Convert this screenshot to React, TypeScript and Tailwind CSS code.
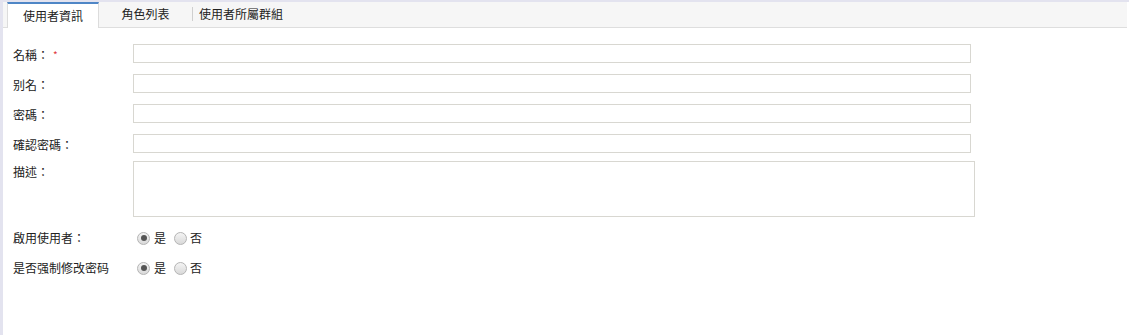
import React from 'react';

const font = "font-['Noto_Sans_CJK_TC','Noto_Sans_CJK_SC',sans-serif]";

function Radio({ checked }: { checked?: boolean }) {
  return (
    <span className="relative inline-flex h-[13px] w-[13px] items-center justify-center rounded-full border border-[#b4b4b4] bg-gradient-to-b from-[#f4f4f4] to-[#d9d9d9]">
      {checked && <span className="h-[6px] w-[6px] rounded-full bg-[#555]" />}
    </span>
  );
}

function RadioGroup() {
  return (
    <div className="flex items-center pl-[4px] text-[12px] text-[#222]">
      <Radio checked />
      <span className="ml-[4px]">是</span>
      <span className="ml-[8px] flex"><Radio /></span>
      <span className="ml-[3px]">否</span>
    </div>
  );
}

function Field({ label, required, mb }: { label: string; required?: boolean; mb: string }) {
  return (
    <div className={`flex ${mb}`}>
      <label className="w-[120px] h-[19px] leading-[19px] pt-[1px] text-[12px] text-[#222]">
        {label}
        {required && <span className="ml-[4px] text-[10px] align-top text-[#e0393e]">*</span>}
      </label>
      <input type="text" className="h-[19px] w-[838px] border border-[#d8d7d1] bg-white outline-none" />
    </div>
  );
}

export default function App() {
  return (
    <div className={`min-h-screen bg-white border-l-[3px] border-t-2 border-[#e3e3ef] ${font}`}>
      {/* Tabs */}
      <div className="mr-[2px] flex h-[26px] items-stretch border-b border-[#dedede] bg-[#f6f6f6] pl-[4px] text-[12px] text-[#222]">
        <div className="-mb-px flex w-[92px] items-center justify-center border-t-2 border-x border-t-[#4f86c6] border-x-[#dcdcdc] bg-white pb-[1px]">
          使用者資訊
        </div>
        <div className="flex w-[93px] items-center justify-center pb-[1px]">角色列表</div>
        <div className="flex items-center pb-[1px]">
          <span className="h-[14px] border-l border-[#cfcfcf]" />
          <span className="pl-[6px]">使用者所屬群組</span>
        </div>
      </div>

      {/* Form */}
      <form className="pl-[10px] pt-[16px]">
        <Field label="名稱：" required mb="mb-[11px]" />
        <Field label="别名：" mb="mb-[11px]" />
        <Field label="密碼：" mb="mb-[11px]" />
        <Field label="確認密碼：" mb="mb-[8px]" />
        <div className="flex">
          <label className="w-[120px] leading-[19px] pt-[1px] text-[12px] text-[#222]">描述：</label>
          <textarea className="h-[56px] w-[842px] resize-none border border-[#d8d7d1] bg-white outline-none" />
        </div>
        <div className="mt-[11px] flex h-[20px] items-center">
          <label className="w-[120px] text-[12px] text-[#222]">啟用使用者：</label>
          <RadioGroup />
        </div>
        <div className="mt-[10px] flex h-[20px] items-center">
          <label className="w-[120px] text-[12px] text-[#222]">是否强制修改密码</label>
          <RadioGroup />
        </div>
      </form>
    </div>
  );
}
